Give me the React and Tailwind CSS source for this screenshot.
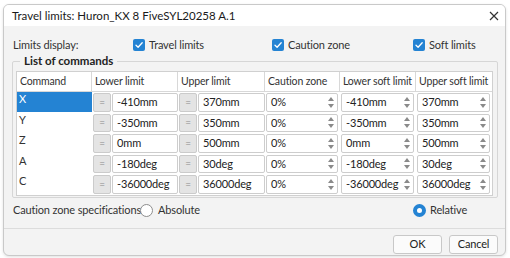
import React from 'react'

const FONT = { fontFamily: 'Lato, "Noto Sans", sans-serif' }

const rows = [
  { cmd: 'X', lower: '-410mm', upper: '370mm', zone: '0%', lowSoft: '-410mm', upSoft: '370mm' },
  { cmd: 'Y', lower: '-350mm', upper: '350mm', zone: '0%', lowSoft: '-350mm', upSoft: '350mm' },
  { cmd: 'Z', lower: '0mm', upper: '500mm', zone: '0%', lowSoft: '0mm', upSoft: '500mm' },
  { cmd: 'A', lower: '-180deg', upper: '30deg', zone: '0%', lowSoft: '-180deg', upSoft: '30deg' },
  { cmd: 'C', lower: '-36000deg', upper: '36000deg', zone: '0%', lowSoft: '-36000deg', upSoft: '36000deg' },
]

const headers = ['Command', 'Lower limit', 'Upper limit', 'Caution zone', 'Lower soft limit', 'Upper soft limit']

const Check = ({ label }) => (
  <div className="flex items-center gap-[4px]">
    <svg width="12" height="12" viewBox="0 0 12 12">
      <rect x="0" y="0" width="12" height="12" rx="2" fill="#2483d3" />
      <path d="M3 6.2 L5.1 8.2 L9.2 3.8" stroke="#fff" strokeWidth="1.3" fill="none" strokeLinecap="round" strokeLinejoin="round" />
    </svg>
    <span>{label}</span>
  </div>
)

const EqCell = ({ value }) => (
  <div className="flex h-full pl-[1px] py-[1px]">
    <div className="w-[18px] flex items-center justify-center bg-[#e4e4e4] border border-[#cbcbcb] rounded-[2px] text-[#8a8a8a] text-[10px]">
      =
    </div>
    <div className="flex-1 ml-[1px] flex items-center pl-[4px] bg-white border border-[#cdcdcd] rounded-[2px] text-[#222]">
      {value}
    </div>
  </div>
)

const SpinCell = ({ value }) => (
  <div className="flex h-full pl-[1px] pr-[2px] py-[1px]">
    <div className="flex-1 flex items-center bg-white border border-[#cdcdcd] rounded-[2px] text-[#222]">
      <span className="flex-1 pl-[4px]">{value}</span>
      <div className="w-[10px] h-full flex flex-col items-center justify-center gap-[3px] mr-[1px]">
        <svg width="6" height="4" viewBox="0 0 6 4">
          <path d="M0 4 L3 0 L6 4 Z" fill="#8a8a8a" />
        </svg>
        <svg width="6" height="4" viewBox="0 0 6 4">
          <path d="M0 0 L3 4 L6 0 Z" fill="#8a8a8a" />
        </svg>
      </div>
    </div>
  </div>
)

export default function App() {
  return (
    <div className="w-[510px] h-[258px] bg-white pt-[4px] pl-[3px] text-[11px] tracking-[-0.15px] whitespace-nowrap text-[#222]" style={FONT}>
      <div className="w-[503px] h-[252px] border border-[#c9c9c9] rounded-[6px] overflow-hidden bg-[#f3f3f3] flex flex-col shadow-[0_1px_3px_rgba(0,0,0,0.12)]">
        {/* title bar */}
        <div className="h-[21px] bg-white flex items-center justify-between pl-[8px] pr-[6px] text-[#1a1a1a]">
          <span className="text-[11.5px] tracking-normal">Travel limits: Huron_KX 8 FiveSYL20258 A.1</span>
          <svg width="10" height="10" viewBox="0 0 10 10">
            <path d="M1 1 L9 9 M9 1 L1 9" stroke="#333" strokeWidth="1.2" />
          </svg>
        </div>

        {/* limits display */}
        <div className="h-[14px] mt-[12px] flex items-center pl-[9px] text-[#333]">
          <span className="w-[120px]">Limits display:</span>
          <div className="w-[139px]"><Check label="Travel limits" /></div>
          <div className="w-[141px]"><Check label="Caution zone" /></div>
          <Check label="Soft limits" />
        </div>

        {/* group */}
        <fieldset className="mt-[2px] ml-[8px] w-[486px] border border-[#d6d6d6] rounded-[2px] pl-[3px] pr-[4px] pb-[1px]">
          <legend className="ml-[4px] px-[4px] font-bold text-[#222] leading-[14px] text-[11.5px] tracking-normal">List of commands</legend>
          <div className="mt-[3px] grid grid-cols-[75px_86px_87px_75px_76px_76px] border border-[#d0d0d0] bg-white">
            {headers.map((h, i) => (
              <div
                key={h}
                className={`h-[20px] flex items-center pl-[3px] text-[10.5px] text-[#333] overflow-hidden border-b border-[#d8d8d8] ${i < 5 ? 'border-r' : ''}`}
              >
                {h}
              </div>
            ))}
            {rows.map((r, i) => (
              <React.Fragment key={r.cmd}>
                <div className={`h-[20px] pl-[2px] leading-[14px] ${i === 0 ? 'bg-[#2483d3] text-white' : 'text-[#333]'}`}>
                  {r.cmd}
                </div>
                <EqCell value={r.lower} />
                <EqCell value={r.upper} />
                <SpinCell value={r.zone} />
                <SpinCell value={r.lowSoft} />
                <SpinCell value={r.upSoft} />
              </React.Fragment>
            ))}
          </div>
        </fieldset>

        {/* caution zone specs */}
        <div className="h-[14px] mt-[6px] flex items-center pl-[9px] text-[#333]">
          <span className="w-[127px]">Caution zone specifications:</span>
          <div className="w-[273px] flex items-center gap-[5px]">
            <span className="w-[13px] h-[13px] rounded-full border border-[#8d8d8d] bg-white" />
            <span>Absolute</span>
          </div>
          <div className="flex items-center gap-[4px]">
            <span className="w-[13px] h-[13px] rounded-full border-[4px] border-[#2483d3] bg-white" />
            <span>Relative</span>
          </div>
        </div>

        {/* footer */}
        <div className="mt-[10px] border-t border-[#dcdcdc] flex-1 flex justify-end items-start pt-[6px] pr-[7px] gap-[7px]">
          <button className="w-[49px] h-[19px] bg-[#fbfbfb] border border-[#c8c8c8] rounded-[3px] text-[#222]">OK</button>
          <button className="w-[49px] h-[19px] bg-[#fbfbfb] border border-[#c8c8c8] rounded-[3px] text-[#222]">Cancel</button>
        </div>
      </div>
    </div>
  )
}
